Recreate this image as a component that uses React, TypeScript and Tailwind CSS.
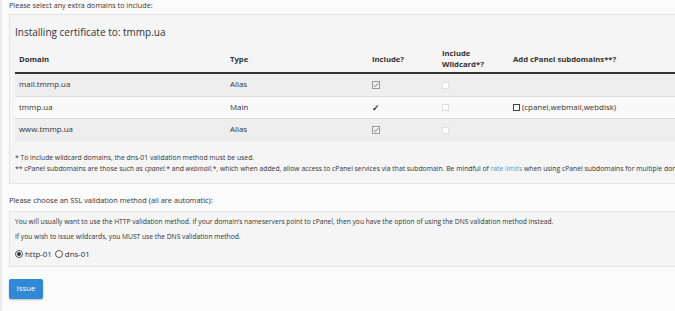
import type { ReactNode } from 'react';

// Add-domain SSL install screen (cPanel style), rendered at the reference's small scale.

interface DomainRow {
  domain: string;
  type: 'Main' | 'Alias';
  stripe: boolean;
}

const ROWS: DomainRow[] = [
  { domain: 'mail.tmmp.ua', type: 'Alias', stripe: true },
  { domain: 'tmmp.ua', type: 'Main', stripe: false },
  { domain: 'www.tmmp.ua', type: 'Alias', stripe: true },
];

const GRID = 'grid grid-cols-[211px_142px_70px_71px_1fr]';

function CheckedDisabled() {
  return (
    <svg width="8" height="8" viewBox="0 0 8 8" className="block">
      <rect x="0.5" y="0.5" width="7" height="7" fill="#f2f2f2" stroke="#9a9a9a" />
      <path d="M1.8 4.2 L3.3 5.6 L6.2 2.2" fill="none" stroke="#7a7a7a" strokeWidth="1" />
    </svg>
  );
}

function EmptyDisabled() {
  return <span className="block h-[7px] w-[7px] border border-[#dedede] bg-white" />;
}

function Radio({ checked }: { checked: boolean }) {
  return (
    <span className="flex h-[8px] w-[8px] items-center justify-center rounded-full border border-[#555] bg-white">
      {checked && <span className="h-[4px] w-[4px] rounded-full bg-[#333]" />}
    </span>
  );
}

function Cell({ children, className = '' }: { children?: ReactNode; className?: string }) {
  return <div className={`flex items-center pl-[4px] ${className}`}>{children}</div>;
}

export default function App() {
  return (
    <div
      className="relative h-[311px] w-[675px] overflow-hidden bg-[#fbfbfb] text-[#333]"
      style={{ fontFamily: '"Open Sans", "Liberation Sans", sans-serif' }}
    >
      <div className="absolute left-0 top-0 h-full w-[2px] bg-[#e9e9e9]" />

      <div className="w-[760px] pl-[9px]">
        <p className="text-[7.2px] leading-[11px]">Please select any extra domains to include:</p>

        <section className="mt-[3px] border border-[#e4e4e4] bg-[#f5f5f5] pl-[5px] pt-[10px] pb-[9px]">
          <h2 className="text-[10px] leading-[14px]">Installing certificate to: tmmp.ua</h2>

          <div className={`${GRID} mt-[7px] h-[28px] border-b-2 border-[#333] text-[7.7px] font-bold leading-[11px]`}>
            <Cell>Domain</Cell>
            <Cell>Type</Cell>
            <Cell>Include?</Cell>
            <Cell>
              Include
              <br />
              Wildcard*?
            </Cell>
            <Cell>Add cPanel subdomains**?</Cell>
          </div>

          {ROWS.map((row, i) => (
            <div
              key={row.domain}
              className={`${GRID} h-[22px] text-[7.9px] ${i > 0 ? 'border-t border-[#dcdcdc]' : ''} ${row.stripe ? 'bg-[#eeeeee]' : 'bg-[#f9f9f9]'} ${i === 2 ? 'h-[23px]' : ''}`}
            >
              <Cell>{row.domain}</Cell>
              <Cell>{row.type}</Cell>
              <Cell>
                {row.type === 'Main' ? (
                  <span className="text-[9px] font-bold leading-none">✓</span>
                ) : (
                  <CheckedDisabled />
                )}
              </Cell>
              <Cell>
                <EmptyDisabled />
              </Cell>
              <Cell>
                {row.type === 'Main' && (
                  <>
                    <span className="mr-[2px] block h-[7px] w-[7px] border border-[#444] bg-white" />
                    (cpanel,webmail,webdisk)
                  </>
                )}
              </Cell>
            </div>
          ))}

          <div className="mt-[11px] whitespace-nowrap text-[6.8px] leading-[11px]">
            <p>* To include wildcard domains, the dns-01 validation method must be used.</p>
            <p>
              ** cPanel subdomains are those such as <i>cpanel.</i>* and <i>webmail.</i>*, which when
              added, allow access to cPanel services via that subdomain. Be mindful of{' '}
              <a className="text-[#5b93d6]">rate limits</a> when using cPanel subdomains for multiple
              domains.
            </p>
          </div>
        </section>

        <p className="mt-[11px] text-[7.4px] leading-[11px]">
          Please choose an SSL validation method (all are automatic):
        </p>

        <section className="mt-[5px] border border-[#e4e4e4] bg-[#f5f5f5] pl-[5px] pt-[4px] pb-[5px] text-[6.7px] leading-[11px]">
          <p>
            You will usually want to use the HTTP validation method. If your domain’s nameservers point
            to cPanel, then you have the option of using the DNS validation method instead.
          </p>
          <p className="mt-[4px]">If you wish to issue wildcards, you MUST use the DNS validation method.</p>
          <div className="mt-[5px] flex h-[14px] items-center text-[7.9px]">
            <Radio checked />
            <span className="ml-[2px] mr-[3px]">http-01</span>
            <Radio checked={false} />
            <span className="ml-[2px]">dns-01</span>
          </div>
        </section>

        <button
          type="button"
          className="mt-[12px] h-[20px] w-[34px] rounded-[2px] bg-[#3089d6] text-[7.9px] text-white shadow-[0_1px_2px_rgba(0,0,0,0.25)]"
        >
          Issue
        </button>
      </div>
    </div>
  );
}
